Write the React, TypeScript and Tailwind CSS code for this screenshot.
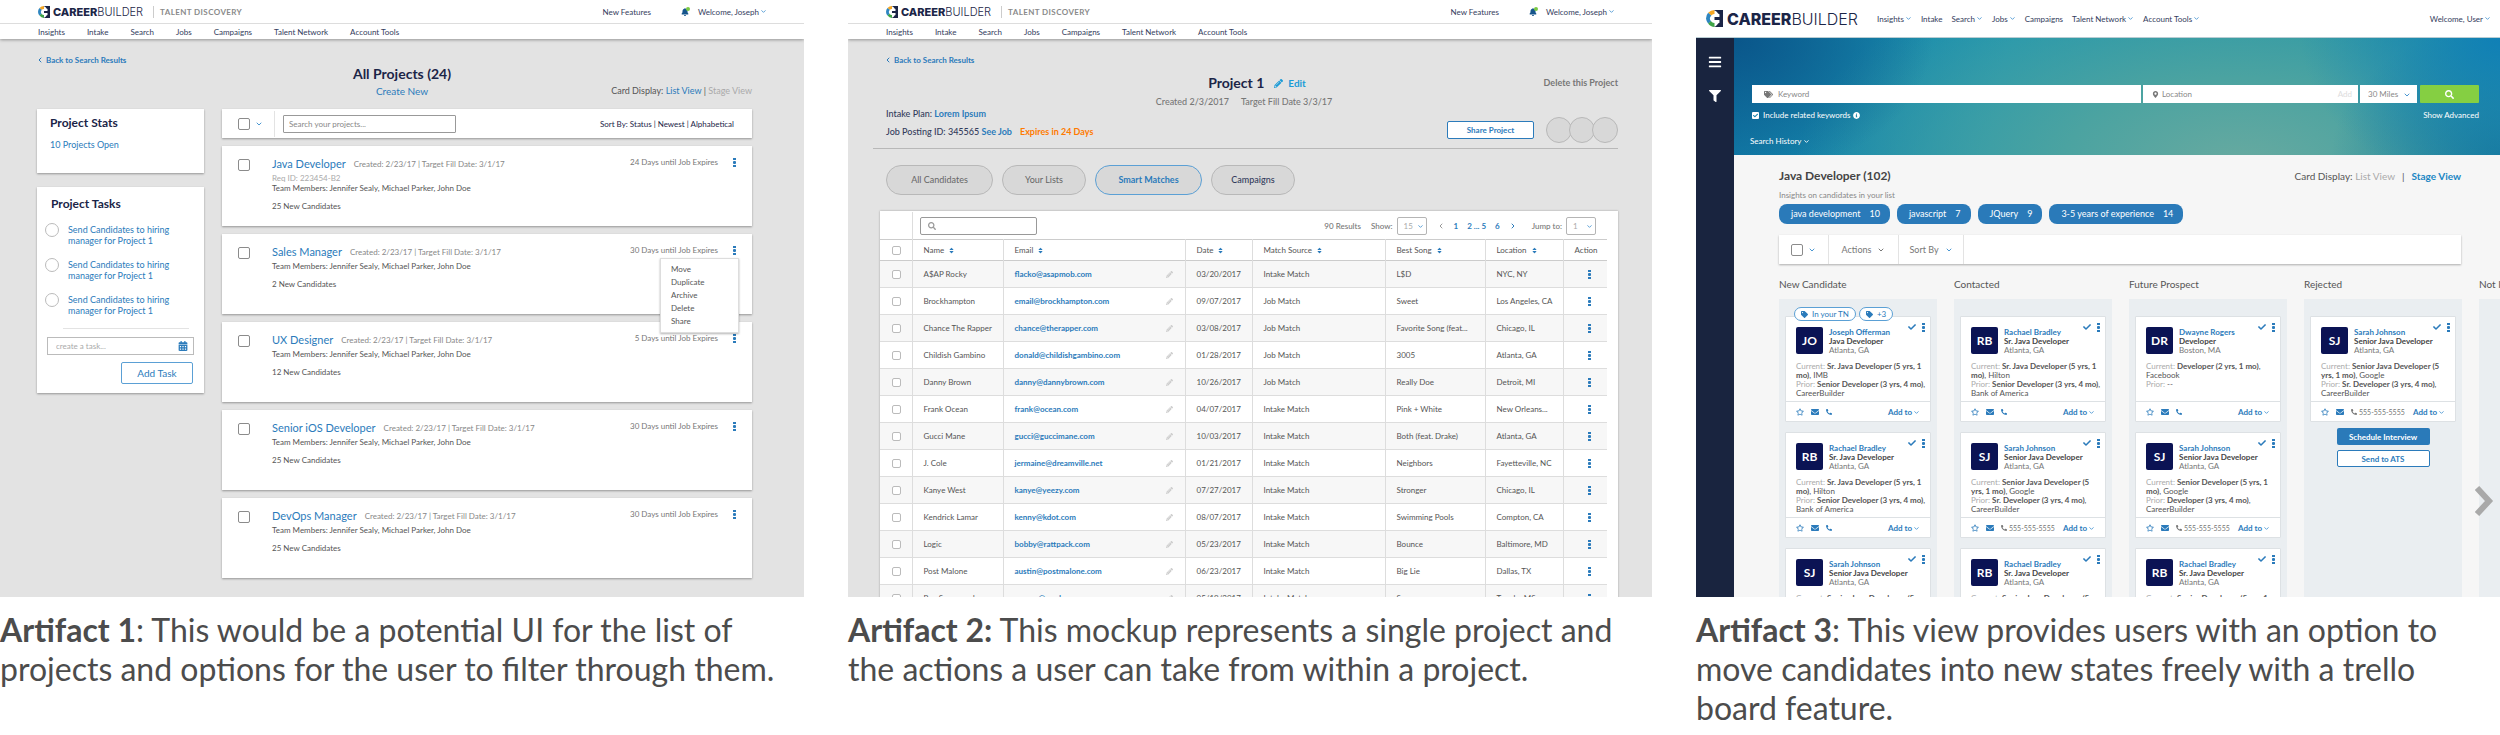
import React, { ReactNode } from "react";

import {
  FaBars,
  FaBell,
  FaCalendarAlt,
  FaCheck,
  FaEnvelope,
  FaFilter,
  FaInfoCircle,
  FaMapMarkerAlt,
  FaPencilAlt,
  FaPhoneAlt,
  FaRegStar,
  FaSearch,
  FaSort,
  FaTag,
  FaTags,
} from "react-icons/fa";
import { ChevronDown, ChevronLeft, ChevronRight } from "lucide-react";

interface Project {
  title: string;
  req?: string;
  expires: string;
  candidates: string;
  menu?: boolean;
}

interface Candidate {
  initials: string;
  name: string;
  title: string;
  place: string;
  current: string;
  company: string;
  prior?: string;
  priorCompany?: string;
  phone?: string;
  tags?: string[];
}

const navItems = ["Insights", "Intake", "Search", "Jobs", "Campaigns", "Talent Network", "Account Tools"];

const projects: Project[] = [
  { title: "Java Developer", req: "Req ID: 223454-B2", expires: "24 Days until Job Expires", candidates: "25 New Candidates" },
  { title: "Sales Manager", expires: "30 Days until Job Expires", candidates: "2 New Candidates", menu: true },
  { title: "UX Designer", expires: "5 Days until Job Expires", candidates: "12 New Candidates" },
  { title: "Senior iOS Developer", expires: "30 Days until Job Expires", candidates: "25 New Candidates" },
  { title: "DevOps Manager", expires: "30 Days until Job Expires", candidates: "25 New Candidates" },
];

const people = [
  ["A$AP Rocky", "flacko@asapmob.com", "03/20/2017", "Intake Match", "L$D", "NYC, NY"],
  ["Brockhampton", "email@brockhampton.com", "09/07/2017", "Job Match", "Sweet", "Los Angeles, CA"],
  ["Chance The Rapper", "chance@therapper.com", "03/08/2017", "Job Match", "Favorite Song (feat...", "Chicago, IL"],
  ["Childish Gambino", "donald@childishgambino.com", "01/28/2017", "Job Match", "3005", "Atlanta, GA"],
  ["Danny Brown", "danny@dannybrown.com", "10/26/2017", "Job Match", "Really Doe", "Detroit, MI"],
  ["Frank Ocean", "frank@ocean.com", "04/07/2017", "Intake Match", "Pink + White", "New Orleans..."],
  ["Gucci Mane", "gucci@guccimane.com", "10/03/2017", "Intake Match", "Both (feat. Drake)", "Atlanta, GA"],
  ["J. Cole", "jermaine@dreamville.net", "01/21/2017", "Intake Match", "Neighbors", "Fayetteville, NC"],
  ["Kanye West", "kanye@yeezy.com", "07/27/2017", "Intake Match", "Stronger", "Chicago, IL"],
  ["Kendrick Lamar", "kenny@kdot.com", "08/07/2017", "Intake Match", "Swimming Pools", "Compton, CA"],
  ["Logic", "bobby@rattpack.com", "05/23/2017", "Intake Match", "Bounce", "Baltimore, MD"],
  ["Post Malone", "austin@postmalone.com", "06/23/2017", "Intake Match", "Big Lie", "Dallas, TX"],
  ["Rae Sremmurd", "sremm@eardrummers.com", "05/19/2017", "Intake Match", "Swang", "Tupelo, MS"],
];

const joseph: Candidate = {
  initials: "JO", name: "Joseph Offerman", title: "Java Developer", place: "Atlanta, GA",
  current: "Sr. Java Developer (5 yrs, 1 mo)", company: "IMB",
  prior: "Senior Developer (3 yrs, 4 mo)", priorCompany: "CareerBuilder",
  tags: ["In your TN", "+3"],
};
const rachael: Candidate = {
  initials: "RB", name: "Rachael Bradley", title: "Sr. Java Developer", place: "Atlanta, GA",
  current: "Sr. Java Developer (5 yrs, 1 mo)", company: "Hilton",
  prior: "Senior Developer (3 yrs, 4 mo)", priorCompany: "Bank of America",
};
const sarah: Candidate = {
  initials: "SJ", name: "Sarah Johnson", title: "Senior Java Developer", place: "Atlanta, GA",
  current: "Senior Java Developer (5 yrs, 1 mo)", company: "Google",
  prior: "Sr. Developer (3 yrs, 4 mo)", priorCompany: "CareerBuilder", phone: "555-555-5555",
};
const dwayne: Candidate = {
  initials: "DR", name: "Dwayne Rogers", title: "Developer", place: "Boston, MA",
  current: "Developer (2 yrs, 1 mo)", company: "Facebook",
};

const board: { name: string; cards: Candidate[]; actions?: boolean }[] = [
  { name: "New Candidate", cards: [joseph, rachael, sarah] },
  { name: "Contacted", cards: [rachael, sarah, { ...rachael, current: "Senior Java Developer (5 yrs, 1 mo)" }] },
  {
    name: "Future Prospect",
    cards: [
      dwayne,
      { ...sarah, current: "Senior Developer (5 yrs, 1 mo)", prior: "Developer (3 yrs, 4 mo)" },
      { ...rachael, current: "Senior Developer (5 yrs, 1 mo)" },
    ],
  },
  { name: "Rejected", cards: [sarah], actions: true },
  { name: "Not Interested", cards: [] },
];

const insights = [
  ["java development", "10"],
  ["javascript", "7"],
  ["JQuery", "9"],
  ["3-5 years of experience", "14"],
];

const LogoMark = ({ size }: { size: number }) => (
  <svg width={size} height={size} viewBox="0 0 24 24" aria-hidden="true">
    <path d="M12 0A12 12 0 0 0 3 4l6 5 3-2z" fill="#f5a623" />
    <path d="M3 4a12 12 0 0 0-3 8 12 12 0 0 0 3 7l6-4V9z" fill="#2e86c1" />
    <path d="M3 19a12 12 0 0 0 9 5v-7l-3-3z" fill="#3fa447" />
    <path d="M11 0h13v24H11c3-1 5-3 6-5l2-1v-4h-7v-4h7V6l-2-1c-1-2-3-4-6-5z" fill="#1b2547" />
    <path d="M15 7a6 6 0 1 0 0 10v-3h-4v-4h4z" fill="#fff" />
  </svg>
);

const Down = ({ size = 8 }: { size?: number }) => (
  <ChevronDown size={size} strokeWidth={3} className="shrink-0 text-[#4a97d2]" />
);

const Dots = () => (
  <svg width="3" height="9" viewBox="0 0 3 9" aria-hidden="true" className="fill-[#2b7bbb]">
    <rect width="3" height="2" />
    <rect y="3" width="3" height="3" rx="1" />
    <rect y="7" width="3" height="2" />
  </svg>
);

const MoreButton = ({ label }: { label: string }) => (
  <button aria-label={label} className="flex"><Dots /></button>
);

const CheckBox = ({ label, small }: { label: string; small?: boolean }) => (
  <input
    type="checkbox"
    aria-label={label}
    className={small
      ? "block size-[9px] appearance-none rounded-[2px] border border-[#bbb] bg-white"
      : "block size-3 appearance-none rounded-[2px] border border-[#8b8b8b] bg-white"}
  />
);

const MiniSelect = ({ label, value }: { label: string; value: string }) => (
  <span className="relative">
    <select
      aria-label={label}
      className="block h-[18px] w-[30px] appearance-none rounded-[2px] border border-[#b5b5b5] bg-white pl-[6px] text-[8px] text-[#aaa]"
    >
      <option>{value}</option>
    </select>
    <span className="pointer-events-none absolute top-[6px] right-[3px]"><Down size={7} /></span>
  </span>
);

const TopBar = () => (
  <header className="relative bg-white shadow-[0_1px_3px_rgba(0,0,0,0.35)]">
    <div className="flex h-6 items-center border-b border-[#ddd] pr-[37px] pl-[38px]">
      <LogoMark size={12} />
      <span className="ml-[3px] font-['Inter',sans-serif] text-[11px] leading-[12px] text-[#1b2547]">
        <b className="font-extrabold">CAREER</b>
        <span className="font-light">BUILDER</span>
      </span>
      <span className="ml-[10px] border-l border-[#ccc] pl-[6px] text-[8px] leading-[12px] font-bold tracking-wider text-[#8a8a8a]">
        TALENT DISCOVERY
      </span>
      <a href="#" className="ml-auto text-[8px] text-[#333c5c]">New Features</a>
      <span className="relative ml-[30px]">
        <FaBell size={8} className="text-[#16558c]" />
        <i className="absolute -top-[1px] -right-[1px] size-[4px] rounded-full bg-[#7ac943]" />
      </span>
      <a href="#" className="ml-[9px] flex items-center gap-px text-[8px] text-[#333c5c]">
        Welcome, Joseph <Down size={7} />
      </a>
    </div>
    <nav className="flex h-[15px] items-center gap-[22px] pl-[38px] text-[8px] text-[#333c5c]">
      {navItems.map((item) => <a href="#" key={item}>{item}</a>)}
    </nav>
  </header>
);

const BackLink = () => (
  <a href="#" className="ml-[36px] flex h-3 items-center gap-[2px] text-[8px] font-bold text-[#2b7bbb]">
    <ChevronLeft size={8} strokeWidth={3} /> Back to Search Results
  </a>
);

const ProjectCard = ({ project }: { project: Project }) => (
  <article className="relative flex h-20 bg-white pt-[10px] shadow-[0_1px_2px_rgba(0,0,0,0.35)]">
    <div className="w-[50px] shrink-0 pt-[3px] pl-4"><CheckBox label={project.title} /></div>
    <div className="text-[8px] leading-[10px] text-[#555]">
      <h3 className="mb-px flex items-center gap-2 leading-[16px]">
        <a href="#" className="text-[11px] text-[#2b7bbb]">{project.title}</a>
        <span className="text-[#888]">Created: 2/23/17 | Target Fill Date: 3/1/17</span>
      </h3>
      {project.req && <p className="text-[#aaa]">{project.req}</p>}
      <p>Team Members: Jennifer Sealy, Michael Parker, John Doe</p>
      <p className="mt-2">{project.candidates}</p>
    </div>
    <div className="ml-auto flex h-3 items-center gap-[15px] pr-4">
      <span className="text-[8px] text-[#777]">{project.expires}</span>
      <MoreButton label="Project actions" />
    </div>
    {project.menu && (
      <ul className="absolute top-6 right-[13px] z-10 w-[79px] border border-[#ddd] bg-white px-[10px] py-1 text-[8px] leading-[13px] text-[#555] shadow-[0_1px_2px_rgba(0,0,0,0.3)]">
        {["Move", "Duplicate", "Archive", "Delete", "Share"].map((item) => (
          <li key={item}><button className="block">{item}</button></li>
        ))}
      </ul>
    )}
  </article>
);

const ProjectList = () => (
  <div className="h-full bg-[#e3e3e3]">
    <TopBar />
    <div className="pt-[15px]"><BackLink /></div>
    <h1 className="text-center text-[14px] leading-[16px] font-bold text-[#1b2547]">All Projects (24)</h1>
    <div className="grid grid-cols-[1fr_auto_1fr] items-center px-[52px] leading-[18px]">
      <a href="#" className="col-start-2 text-[10px] text-[#2b7bbb]">Create New</a>
      <p className="text-right text-[9px] text-[#555]">
        Card Display: <a href="#" className="text-[#2b7bbb]">List View</a> | <a href="#" className="text-[#aaa]">Stage View</a>
      </p>
    </div>
    <div className="grid grid-cols-[167px_1fr] items-start gap-[18px] pt-[9px] pr-[52px] pl-[37px]">
      <aside className="flex flex-col gap-[14px]">
        <section className="h-16 bg-white px-[13px] pt-[6px] shadow-[0_1px_2px_rgba(0,0,0,0.35)]">
          <h2 className="text-[12px] leading-[16px] font-bold text-[#1b2547]">Project Stats</h2>
          <a href="#" className="mt-2 block text-[9px] leading-[12px] text-[#2b7bbb]">10 Projects Open</a>
        </section>
        <section className="bg-white pt-[9px] pb-[9px] shadow-[0_1px_2px_rgba(0,0,0,0.35)]">
          <h2 className="pl-[14px] text-[12px] leading-[16px] font-bold text-[#1b2547]">Project Tasks</h2>
          <div className="mt-3 flex flex-col gap-[13px] pl-2">
            {[1, 2, 3].map((n) => (
              <label key={n} className="flex gap-[9px] text-[9px] leading-[11px] text-[#2b7bbb]">
                <input type="checkbox" className="-mt-px size-[14px] appearance-none rounded-full border border-[#bbb] bg-white" />
                <span>Send Candidates to hiring<br />manager for Project 1</span>
              </label>
            ))}
          </div>
          <hr className="mt-3 mr-[15px] ml-[26px] border-[#e3e3e3]" />
          <div className="relative mx-[10px] mt-2">
            <input
              aria-label="Create a task"
              placeholder="create a task..."
              className="block h-[18px] w-full border border-[#bbb] pl-2 text-[8px] placeholder:text-[#aaa]"
            />
            <FaCalendarAlt size={10} className="absolute top-1 right-[6px] text-[#2b7bbb]" />
          </div>
          <button className="mt-[7px] mr-[11px] ml-auto block h-[22px] w-[72px] rounded-[2px] border border-[#5ba0d5] text-[10px] text-[#2b7bbb]">
            Add Task
          </button>
        </section>
      </aside>
      <main className="flex flex-col gap-2">
        <div className="flex h-[29px] items-center bg-white pr-[18px] shadow-[0_1px_2px_rgba(0,0,0,0.35)]">
          <span className="flex h-[26px] w-[53px] items-center gap-[5px] border-r border-[#e3e3e3] pl-4">
            <CheckBox label="Select all projects" />
            <Down />
          </span>
          <input
            aria-label="Search your projects"
            placeholder="Search your projects..."
            className="ml-2 h-[18px] w-[173px] rounded-[1px] border border-[#999] pl-[5px] text-[8px] placeholder:text-[#888]"
          />
          <p className="ml-auto text-[8px] text-[#1b2547]">Sort By: Status | Newest | Alphabetical</p>
        </div>
        {projects.map((p) => <ProjectCard key={p.title} project={p} />)}
      </main>
    </div>
  </div>
);

const Th = ({ children }: { children: string }) => (
  <th className="border-l border-[#ddd] px-[11px] font-normal">
    <span className="flex items-center gap-1">{children} <FaSort size={7} className="text-[#2b7bbb]" /></span>
  </th>
);

const Td = ({ children }: { children: ReactNode }) => (
  <td className="truncate border-l border-[#ddd] pl-[11px]">{children}</td>
);

const ProjectDetail = () => (
  <div className="h-full bg-[#e3e3e3] text-[9px]">
    <TopBar />
    <div className="pt-[15px]"><BackLink /></div>
    <div className="mt-2 grid grid-cols-[1fr_auto_1fr] items-center pr-[34px] pl-12 leading-[18px]">
      <h1 className="col-start-2 flex items-center text-[14px] font-bold text-[#1b2547]">
        Project 1
        <a href="#" className="ml-[10px] flex items-center gap-[5px] text-[10px] text-[#1a9bd7]">
          <FaPencilAlt size={9} /> Edit
        </a>
      </h1>
      <a href="#" className="text-right font-bold text-[#777]">Delete this Project</a>
    </div>
    <p className="mt-1 flex justify-center gap-3 pr-3 leading-[12px] font-medium text-[#777]">
      <span>Created 2/3/2017</span>
      <span>Target Fill Date 3/3/17</span>
    </p>
    <div className="mr-[34px] ml-[25px] flex h-[41px] items-start border-b border-[#b8b8b8] pl-[13px] leading-[12px] font-medium text-[#333c5c]">
      <div>
        <p>Intake Plan: <a href="#" className="font-bold text-[#2b7bbb]">Lorem Ipsum</a></p>
        <p className="mt-[6px]">
          Job Posting ID: 345565 <a href="#" className="font-bold text-[#2b7bbb]">See Job</a>
          <b className="ml-2 text-[#ff7a00]">Expires in 24 Days</b>
        </p>
      </div>
      <div className="mt-[9px] ml-auto flex items-center">
        <button className="h-[18px] w-[87px] rounded-[2px] border border-[#2b7bbb] bg-white text-[8px] font-bold text-[#2b7bbb]">
          Share Project
        </button>
        <div className="ml-3 flex -space-x-[3px]">
          <i className="size-[26px] rounded-full border border-[#b8b8b8] bg-[#d8d8d8]" />
          <i className="size-[26px] rounded-full border border-[#b8b8b8] bg-[#d8d8d8]" />
          <i className="size-[26px] rounded-full border border-[#b8b8b8] bg-[#d8d8d8]" />
        </div>
      </div>
    </div>
    <div className="mt-4 flex gap-[9px] pl-[38px] text-[#666]">
      <button className="h-[30px] w-[107px] rounded-full border border-[#b8b8b8] bg-[#d8d8d8]">All Candidates</button>
      <button className="h-[30px] w-[84px] rounded-full border border-[#b8b8b8] bg-[#d8d8d8]">Your Lists</button>
      <button className="h-[30px] w-[107px] rounded-full border border-[#5ba0d5] bg-[#d8d8d8] font-bold text-[#2b7bbb]">Smart Matches</button>
      <button className="h-[30px] w-[84px] rounded-full border border-[#b8b8b8] bg-[#d8d8d8] font-medium text-[#333c5c]">Campaigns</button>
    </div>
    <section className="mt-4 mr-[34px] ml-8 bg-white pr-[11px] text-[8px] text-[#555] shadow-[0_0_2px_rgba(0,0,0,0.3)]">
      <div className="flex h-7 items-center pt-px text-[#777]">
        <label className="relative ml-8 flex h-7 items-center border-l border-[#ddd] pl-[7px]">
          <FaSearch size={8} className="absolute left-[15px] text-[#999]" />
          <input aria-label="Search candidates" className="h-[18px] w-[117px] rounded-[2px] border border-[#999] pl-5" />
        </label>
        <span className="ml-auto font-medium">90 Results</span>
        <span className="mr-1 ml-[10px] font-medium">Show:</span>
        <MiniSelect label="Rows shown" value="15" />
        <nav className="mr-[15px] ml-[10px] flex items-center gap-[9px] font-bold text-[#2b7bbb]">
          <ChevronLeft size={8} strokeWidth={3} className="text-[#999]" />
          <a href="#">1</a>
          <a href="#">2 ... 5</a>
          <a href="#">6</a>
          <ChevronRight size={8} strokeWidth={3} />
        </nav>
        <span className="mr-1 font-medium">Jump to:</span>
        <MiniSelect label="Page" value="1" />
        <span className="w-[11px]" />
      </div>
      <table className="w-full table-fixed border-collapse text-left">
        <colgroup>
          <col className="w-8" />
          <col className="w-[91px]" />
          <col />
          <col className="w-[67px]" />
          <col className="w-[133px]" />
          <col className="w-[100px]" />
          <col className="w-[78px]" />
          <col className="w-[44px]" />
        </colgroup>
        <thead>
          <tr className="h-[21px] border-y border-[#ccc]">
            <th className="pl-3"><CheckBox small label="Select all" /></th>
            <Th>Name</Th>
            <Th>Email</Th>
            <Th>Date</Th>
            <Th>Match Source</Th>
            <Th>Best Song</Th>
            <Th>Location</Th>
            <th className="border-l border-[#ddd] pl-[11px] font-normal">Action</th>
          </tr>
        </thead>
        <tbody>
          {people.map(([name, email, date, source, song, place]) => (
            <tr key={name} className="h-[27px] border-b border-[#ddd] odd:bg-[#f7f7f7]">
              <td className="pl-3"><CheckBox small label={name} /></td>
              <Td>{name}</Td>
              <Td>
                <span className="flex items-center justify-between pr-3">
                  <a href="#" className="font-bold text-[#2b7bbb]">{email}</a>
                  <FaPencilAlt size={7} className="text-[#ccc]" />
                </span>
              </Td>
              <Td>{date}</Td>
              <Td>{source}</Td>
              <Td>{song}</Td>
              <Td>{place}</Td>
              <td className="border-l border-[#ddd] pl-6"><MoreButton label={"Actions for " + name} /></td>
            </tr>
          ))}
        </tbody>
      </table>
    </section>
  </div>
);

const CandidateCard = ({ c }: { c: Candidate }) => (
  <article className="relative flex h-[106px] shrink-0 flex-col rounded-[1px] border border-[#dde1e4] bg-white text-[8px] leading-[9px]">
    {c.tags && (
      <div className="absolute -top-[10px] left-2 flex gap-[3px] text-[#2b7bbb]">
        {c.tags.map((tag) => (
          <span key={tag} className="flex h-[14px] items-center gap-1 rounded-full border border-[#5ba0d5] bg-white px-[6px]">
            <FaTag size={7} /> {tag}
          </span>
        ))}
      </div>
    )}
    <div className="flex pt-[10px] pl-[10px]">
      <span className="flex size-[27px] shrink-0 items-center justify-center rounded-[2px] bg-[#0b1354] text-[12px] font-bold text-white">
        {c.initials}
      </span>
      <div className="ml-[6px] whitespace-nowrap text-[#777]">
        <a href="#" className="block leading-[10px] font-bold text-[#2b7bbb]">{c.name}</a>
        <p className="font-bold text-[#444]">{c.title}</p>
        <p>{c.place}</p>
      </div>
      <div className="absolute top-[6px] right-[5px] flex items-start gap-[6px] text-[#2b7bbb]">
        <FaCheck size={8} />
        <MoreButton label="Candidate actions" />
      </div>
    </div>
    <div className="mt-[7px] pr-[3px] pl-[10px] text-[#555]">
      <p><span className="text-[#aaa]">Current:</span> <b>{c.current}</b>, {c.company}</p>
      <p><span className="text-[#aaa]">Prior:</span> {c.prior ? <><b>{c.prior}</b>, {c.priorCompany}</> : "--"}</p>
    </div>
    <footer className="mt-auto flex h-5 items-center border-t border-[#dde1e4] px-[10px] pt-px text-[#2b7bbb]">
      <button aria-label="Favorite"><FaRegStar size={8} /></button>
      <button aria-label="Email" className="ml-[7px]"><FaEnvelope size={8} /></button>
      <span className={c.phone ? "ml-[7px] flex items-center gap-[2px] text-[7px] text-[#777]" : "ml-[7px] flex"}>
        <FaPhoneAlt size={6} /> {c.phone}
      </span>
      <button className="ml-auto flex items-center gap-px font-bold">Add to <Down size={7} /></button>
    </footer>
  </article>
);

const StageBoard = () => (
  <div className="relative flex h-full flex-col bg-[#f6f6f6]">
    <header className="flex h-[38px] shrink-0 items-center border-b border-[#b9cdd3] bg-white pr-[9px] pl-[10px] text-[8px] text-[#333c5c]">
      <LogoMark size={17} />
      <span className="ml-1 font-['Inter',sans-serif] text-[16px] leading-[18px] text-[#1b2547]">
        <b className="font-extrabold">CAREER</b>
        <span className="font-light">BUILDER</span>
      </span>
      <nav className="ml-[19px] flex gap-[9px]">
        {navItems.map((item) => (
          <a href="#" key={item} className="flex items-center gap-px">
            {item}
            {item !== "Intake" && item !== "Campaigns" && <Down size={7} />}
          </a>
        ))}
      </nav>
      <a href="#" className="ml-auto flex items-center gap-px">Welcome, User <Down size={7} /></a>
    </header>
    <div className="flex min-h-0 grow">
      <aside className="flex w-[38px] shrink-0 flex-col items-center gap-[21px] bg-[#19243f] pt-[17px] text-white">
        <button aria-label="Menu"><FaBars size={14} /></button>
        <button aria-label="Filter"><FaFilter size={12} /></button>
      </aside>
      <div className="flex min-w-0 grow flex-col overflow-hidden">
        <section className="h-[117px] shrink-0 bg-[radial-gradient(ellipse_26%_120%_at_0%_0%,#0a568a,transparent),radial-gradient(ellipse_26%_130%_at_100%_0%,#1080b6,transparent),radial-gradient(ellipse_22%_110%_at_100%_100%,#1b7b9c,transparent),radial-gradient(ellipse_58%_190%_at_66%_110%,#68aaa0,#4ba3a1_40%,transparent),linear-gradient(100deg,#1179a6,#1d95b0_35%,#1c90a4)] pt-[47px] pr-[21px] pl-[18px] text-[8px] text-white">
          <form className="flex h-[18px] text-[#888]">
            <label className="relative mr-[2px] grow-[3]">
              <FaTags size={9} className="absolute top-[5px] left-3 text-[#777]" />
              <input placeholder="Keyword" aria-label="Keyword" className="block h-full w-full bg-white pl-[26px] placeholder:text-[#888]" />
            </label>
            <label className="relative mr-[2px] w-[215px]">
              <FaMapMarkerAlt size={7} className="absolute top-[6px] left-[9px] text-[#777]" />
              <input placeholder="Location" aria-label="Location" className="block h-full w-full bg-white pl-[19px] placeholder:text-[#888]" />
              <span className="absolute top-[3px] right-[6px] text-[#ddd]">Add</span>
            </label>
            <span className="relative mr-[3px]">
              <select aria-label="Distance" className="block h-full w-[57px] appearance-none bg-white pl-2">
                <option>30 Miles</option>
              </select>
              <span className="pointer-events-none absolute top-[6px] right-[6px]"><Down /></span>
            </span>
            <button type="button" aria-label="Search" className="flex w-[59px] items-center justify-center rounded-[1px] bg-[#85cf42] text-white">
              <FaSearch size={9} />
            </button>
          </form>
          <div className="mt-[6px] flex h-3 items-center">
            <label className="relative flex items-center gap-1">
              <input type="checkbox" defaultChecked className="size-[7px] appearance-none rounded-[1px] bg-white" />
              <FaCheck size={5} className="pointer-events-none absolute left-px text-[#1580a8]" />
              Include related keywords
            </label>
            <FaInfoCircle size={7} className="ml-[2px]" />
            <a href="#" className="ml-auto">Show Advanced</a>
          </div>
          <button className="mt-[14px] -ml-[2px] flex h-3 items-center gap-[2px]">
            Search History <ChevronDown size={7} strokeWidth={3} />
          </button>
        </section>
        <div className="flex min-h-0 grow flex-col pl-[45px]">
          <div className="flex items-center justify-between pt-[13px] pr-[39px] leading-[16px] text-[#444]">
            <h1 className="text-[12px] font-bold">Java Developer (102)</h1>
            <p className="text-[10px] text-[#555]">
              Card Display: <a href="#" className="text-[#aaa]">List View</a>
              <span className="mx-[7px]">|</span>
              <a href="#" className="font-bold text-[#1b87c4]">Stage View</a>
            </p>
          </div>
          <p className="mt-[6px] text-[8px] leading-[10px] text-[#888]">Insights on candidates in your list</p>
          <ul className="mt-1 flex gap-[7px] text-[9px] text-white">
            {insights.map(([name, count]) => (
              <li key={name} className="flex h-5 items-center gap-[9px] rounded-lg bg-[#2a7ab9] pr-[10px] pl-3">
                {name} <span>{count}</span>
              </li>
            ))}
          </ul>
          <div className="mt-[11px] mr-[39px] flex h-[29px] shrink-0 items-center bg-white text-[9px] text-[#777] shadow-[0_1px_2px_rgba(0,0,0,0.3)]">
            <span className="flex h-full w-[50px] items-center gap-[5px] border-r border-[#e3e3e3] pl-3">
              <CheckBox label="Select all candidates" />
              <Down />
            </span>
            <button className="flex h-full w-[70px] items-center justify-center gap-[6px] border-r border-[#e3e3e3]">
              Actions <ChevronDown size={8} strokeWidth={3} />
            </button>
            <button className="flex h-full w-[65px] items-center justify-center gap-[6px] border-r border-[#e3e3e3]">
              Sort By <Down />
            </button>
          </div>
          <div className="mt-3 flex min-h-0 grow gap-[17px]">
            {board.map((column) => (
              <section key={column.name} className="flex w-[158px] shrink-0 flex-col">
                <h2 className="mb-[7px] text-[10px] leading-[16px] whitespace-nowrap text-[#555]">{column.name}</h2>
                <div className="flex min-h-0 grow flex-col gap-[10px] bg-[#eaeef1] px-[6px] pt-[17px]">
                  {column.cards.map((c, i) => <CandidateCard key={i} c={c} />)}
                  {column.actions && (
                    <div className="-mt-1 flex flex-col items-center gap-[5px] text-[8px] font-bold">
                      <button className="h-[17px] w-[93px] rounded-[2px] bg-[#2a7ab9] text-white">Schedule Interview</button>
                      <button className="h-[17px] w-[93px] rounded-[2px] border border-[#2b7bbb] bg-white text-[#2b7bbb]">Send to ATS</button>
                    </div>
                  )}
                </div>
              </section>
            ))}
          </div>
        </div>
      </div>
    </div>
    <button aria-label="Next stages" className="absolute right-[6px] bottom-[81px]">
      <svg width="19" height="30" viewBox="0 0 19 30" fill="none" stroke="#a9a9a9" strokeWidth="6">
        <path d="M2 2l12 13L2 28" />
      </svg>
    </button>
  </div>
);

const Artifact = ({ label, colon, text, children }: { label: string; colon?: boolean; text: string; children: ReactNode }) => (
  <figure>
    <div className="aspect-[804/597] overflow-hidden">{children}</div>
    <figcaption className="mt-[13px] text-[32px] leading-[39px] text-[#4c4c4c]">
      <b>{label}{colon && ":"}</b>{!colon && ":"} {text}
    </figcaption>
  </figure>
);

const App = () => {
  return (
    <div className="grid grid-cols-3 gap-11 overflow-hidden bg-white font-['Lato','Carlito',sans-serif]">
      <Artifact label="Artifact 1" text="This would be a potential UI for the list of projects and options for the user to filter through them.">
        <ProjectList />
      </Artifact>
      <Artifact label="Artifact 2" colon text="This mockup represents a single project and the actions a user can take from within a project.">
        <ProjectDetail />
      </Artifact>
      <Artifact label="Artifact 3" text="This view provides users with an option to move candidates into new states freely with a trello board feature.">
        <StageBoard />
      </Artifact>
    </div>
  );
};

export default App;
